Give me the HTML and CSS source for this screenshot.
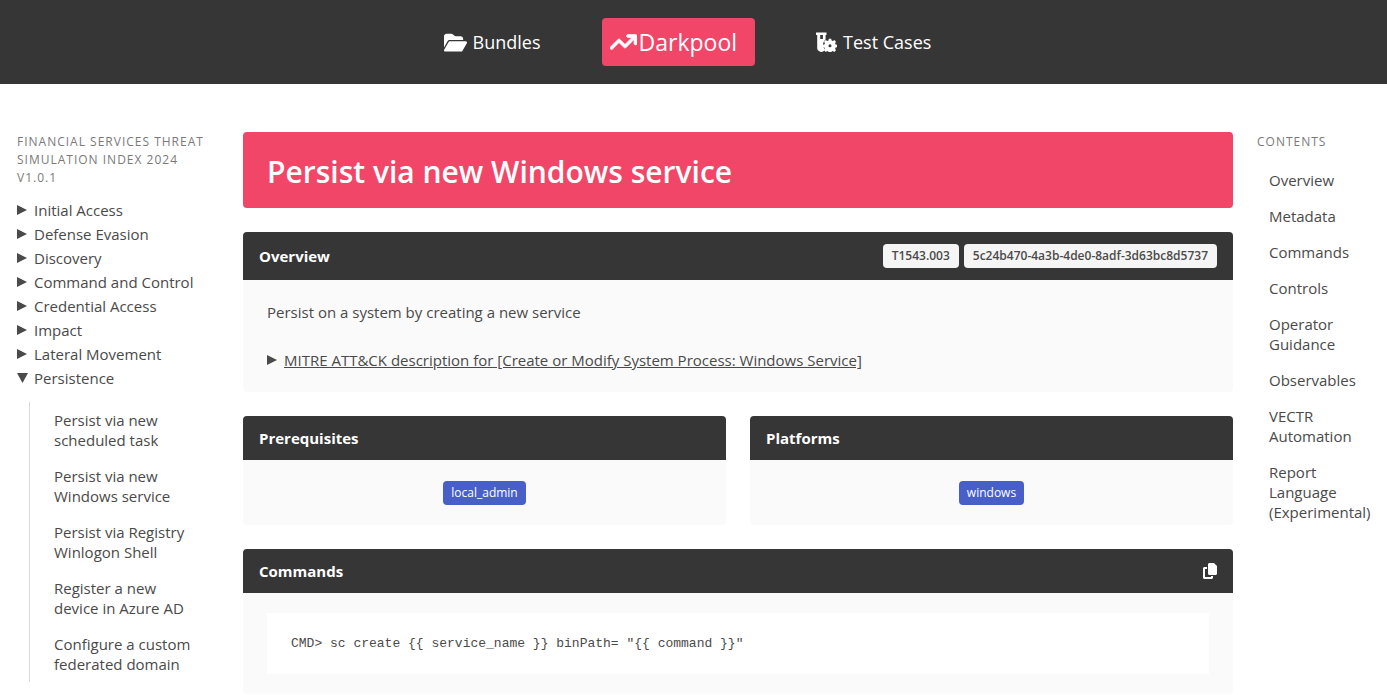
FILE: index.html
```html
<!DOCTYPE html>
<html lang="en">
<head>
<meta charset="utf-8">
<meta name="viewport" content="width=device-width, initial-scale=1">
<title>Persist via new Windows service</title>
<link rel="stylesheet" href="styles.css">
</head>
<body>
<header class="topbar">
  <nav class="topnav" aria-label="Main">
    <a class="topnav-link" href="#bundles">
      <svg class="icon-folder" viewBox="0 0 576 480" fill="currentColor" aria-hidden="true"><path d="M88.700 223.800L0 375.800V96C0 60.700 28.700 32 64 32H181.500c17 0 33.300 6.700 45.300 18.700l26.500 26.500c12 12 28.300 18.700 45.300 18.700H416c35.300 0 64 28.700 64 64v32H144c-22.800 0-43.800 12.100-55.300 31.800zm27.600 16.100C122.100 230 132.600 224 144 224H544c11.500 0 22 6.100 27.700 16.100s5.700 22.200-.1 32.100l-112 192C453.900 474 443.400 480 432 480H32c-11.500 0-22-6.100-27.700-16.100s-5.700-22.200 .1-32.100l112-192z"/></svg>
      <span>Bundles</span>
    </a>
    <a class="topnav-link topnav-active" href="#darkpool" aria-current="page">
      <svg class="icon-trend" viewBox="0 0 576 512" fill="currentColor" aria-hidden="true"><path d="M384 160c-17.700 0-32-14.300-32-32s14.300-32 32-32H544c17.700 0 32 14.300 32 32V288c0 17.700-14.300 32-32 32s-32-14.300-32-32V205.300L342.600 374.600c-12.500 12.500-32.800 12.500-45.300 0L192 269.300 54.600 406.600c-12.500 12.500-32.800 12.500-45.300 0s-12.500-32.800 0-45.300l160-160c12.500-12.500 32.800-12.500 45.300 0L320 306.700 466.700 160H384z" stroke="currentColor" stroke-width="14"/></svg>
      <span>Darkpool</span>
    </a>
    <a class="topnav-link" href="#test-cases">
      <svg class="icon-tube" viewBox="0 0 21 20" fill="currentColor" aria-hidden="true">
        <path fill-rule="evenodd" d="M0 .5h10.500v2.500H9.600v4.400A6.500 6.500 0 0 0 8 16l1 1.800A4.200 4.200 0 0 1 1.200 15.500V3H0zM4.200 3v4h2.700V3z"/>
        <g transform="translate(14 13)">
          <path fill-rule="evenodd" d="M-1.200-6.300h2.400l.4 1.700 1.200.5 1.500-.9 1.700 1.700-.9 1.500.5 1.200 1.700.4v2.400l-1.700.4-.5 1.200.9 1.500-1.700 1.700-1.500-.9-1.200.5-.4 1.700h-2.400l-.4-1.700-1.200-.5-1.500.9-1.700-1.700.9-1.500-.5-1.200-1.700-.4v-2.400l1.700-.4.500-1.200-.9-1.500 1.700-1.700 1.500.9 1.200-.5zM0-.7a1.500 1.500 0 1 0 0 3 1.500 1.500 0 0 0 0-3z"/>
        </g>
      </svg>
      <span>Test Cases</span>
    </a>
  </nav>
</header>

<div class="layout">
  <aside class="sidebar">
    <p class="menu-label">Financial Services Threat Simulation Index 2024 v1.0.1</p>
    <details><summary>Initial Access</summary></details>
    <details><summary>Defense Evasion</summary></details>
    <details><summary>Discovery</summary></details>
    <details><summary>Command and Control</summary></details>
    <details><summary>Credential Access</summary></details>
    <details><summary>Impact</summary></details>
    <details><summary>Lateral Movement</summary></details>
    <details open>
      <summary>Persistence</summary>
      <ul class="menu-list menu-nested">
        <li><a href="#scheduled-task">Persist via new scheduled task</a></li>
        <li><a href="#windows-service">Persist via new Windows service</a></li>
        <li><a href="#winlogon-shell">Persist via Registry Winlogon Shell</a></li>
        <li><a href="#azure-ad">Register a new device in Azure AD</a></li>
        <li><a href="#federated-domain">Configure a custom federated domain</a></li>
      </ul>
    </details>
  </aside>

  <main class="content">
    <h1 class="title">Persist via new Windows service</h1>

    <section class="card" id="overview">
      <header class="card-header">
        <h2>Overview</h2>
        <div class="tags">
          <span class="tag tag-light">T1543.003</span>
          <span class="tag tag-light">5c24b470-4a3b-4de0-8adf-3d63bc8d5737</span>
        </div>
      </header>
      <div class="card-body overview-body">
        <p>Persist on a system by creating a new service</p>
        <details>
          <summary><span class="underlined">MITRE ATT&amp;CK description for [Create or Modify System Process: Windows Service]</span></summary>
        </details>
      </div>
    </section>

    <div class="card-row" id="metadata">
      <section class="card">
        <header class="card-header"><h2>Prerequisites</h2></header>
        <div class="card-body centered"><span class="tag tag-link">local_admin</span></div>
      </section>
      <section class="card">
        <header class="card-header"><h2>Platforms</h2></header>
        <div class="card-body centered"><span class="tag tag-link">windows</span></div>
      </section>
    </div>

    <section class="card" id="commands">
      <header class="card-header">
        <h2>Commands</h2>
        <button class="copy" type="button" aria-label="Copy commands">
          <svg class="icon-copy" viewBox="0 0 448 512" fill="currentColor" aria-hidden="true"><path d="M208 0H332.100c12.700 0 24.900 5.100 33.900 14.100l67.900 67.900c9 9 14.100 21.200 14.100 33.900V336c0 26.500-21.500 48-48 48H208c-26.500 0-48-21.500-48-48V48c0-26.500 21.500-48 48-48zM48 128h80v64H64V448H256V416h64v48c0 26.500-21.500 48-48 48H48c-26.500 0-48-21.500-48-48V176c0-26.500 21.500-48 48-48z"/></svg>
        </button>
      </header>
      <div class="card-body">
        <pre class="code"><code>CMD&gt; sc create {{ service_name }} binPath= "{{ command }}"</code></pre>
      </div>
    </section>
  </main>

  <aside class="toc">
    <p class="menu-label">Contents</p>
    <ul class="menu-list">
      <li><a href="#overview">Overview</a></li>
      <li><a href="#metadata">Metadata</a></li>
      <li><a href="#commands">Commands</a></li>
      <li><a href="#controls">Controls</a></li>
      <li><a href="#operator-guidance">Operator Guidance</a></li>
      <li><a href="#observables">Observables</a></li>
      <li><a href="#vectr-automation">VECTR Automation</a></li>
      <li><a href="#report-language">Report Language (Experimental)</a></li>
    </ul>
  </aside>
</div>
</body>
</html>
```
FILE: styles.css
```css
* {
  box-sizing: border-box;
}

body,
h1,
h2,
p,
ul,
pre {
  margin: 0;
  padding: 0;
}

body {
  background: #fff;
  color: #4a4a4a;
  font-family: "Open Sans", "Noto Sans", sans-serif;
  font-size: 15px;
  line-height: 24px;
}

a {
  color: inherit;
  text-decoration: none;
}

ul {
  list-style: none;
}

svg {
  display: block;
  flex: none;
}

/* Top navigation */
.topbar {
  background: #363636;
  padding: 18px 12px 18px 0;
}

.topnav {
  display: flex;
  justify-content: center;
  align-items: center;
  gap: 61px;
}

.topnav-link {
  display: flex;
  align-items: center;
  gap: 6px;
  color: #fff;
  font-size: 18px;
}

.topnav-active {
  gap: 2px;
  padding: 12px 18px 12px 8px;
  border-radius: 4px;
  background: #f14668;
  font-size: 23px;
}

.icon-folder {
  width: 23px;
  height: 20px;
}

.icon-trend {
  width: 27px;
  height: 24px;
}

.icon-tube {
  width: 21px;
  height: 20px;
}

/* Page columns */
.layout {
  display: grid;
  grid-template-columns: minmax(0, 202fr) minmax(0, 990fr) minmax(0, 113fr);
  gap: 24px;
  padding: 48px 17px 0;
}

.menu-label {
  padding-top: 1px;
  margin-bottom: 11px;
  color: #7a7a7a;
  font-size: 12px;
  line-height: 18px;
  letter-spacing: 1px;
  text-transform: uppercase;
}

summary {
  display: flex;
  align-items: center;
  cursor: pointer;
}

summary::before {
  content: "";
  flex: none;
  width: 10px;
  height: 10px;
  margin-right: 7px;
  background: #4a4a4a;
  clip-path: polygon(0 0, 100% 50%, 0 100%);
}

details[open] > summary::before {
  width: 11px;
  height: 10px;
  margin-right: 6px;
  clip-path: polygon(0 0, 100% 0, 50% 100%);
}

.menu-list {
  line-height: 20px;
}

.menu-list a {
  display: block;
  padding: 8px 12px;
}

.menu-nested {
  margin: 12px 12px 0;
  padding-left: 12px;
  border-left: 1px solid #dbdbdb;
}

.toc .menu-list a {
  padding-right: 0;
}

/* Main column */
.content {
  display: flex;
  flex-direction: column;
  gap: 24px;
}

.title {
  padding: 20px 24px 16px;
  border-radius: 4px;
  background: #f14668;
  color: #fff;
  font-size: 30px;
  font-weight: 600;
  line-height: 40px;
}

.card {
  overflow: hidden;
  border-radius: 4px;
  background: #fafafa;
}

.card-header {
  display: flex;
  justify-content: space-between;
  align-items: center;
  padding: 12px 16px;
  background: #363636;
  color: #fff;
}

.card-header h2 {
  font-size: 15px;
  font-weight: 700;
  line-height: 20px;
}

.card-body {
  padding: 20px 24px;
}

.overview-body {
  display: flex;
  flex-direction: column;
  gap: 24px;
}

.underlined {
  text-decoration: underline;
}

.card-row {
  display: grid;
  grid-template-columns: 1fr 1fr;
  gap: 24px;
}

.centered {
  display: flex;
  justify-content: center;
  padding-top: 21px;
}

.tags {
  display: flex;
  gap: 5px;
}

.tag {
  padding: 0 9px;
  border-radius: 4px;
  font-size: 12px;
}

.tag-light {
  background: #f5f5f5;
  color: #4a4a4a;
  font-weight: 600;
}

.tag-link {
  padding: 0 8px;
  background: #485fc7;
  color: #fff;
}

.copy {
  padding: 0;
  border: 0;
  background: none;
  color: #fff;
  cursor: pointer;
}

.icon-copy {
  width: 14px;
  height: 16px;
}

.code {
  padding: 20px 24px;
  overflow-x: auto;
  background: #fff;
  font-size: 13px;
  line-height: 20px;
}

.code code {
  font-family: "Liberation Mono", monospace;
  font-size: 13px;
}
```
